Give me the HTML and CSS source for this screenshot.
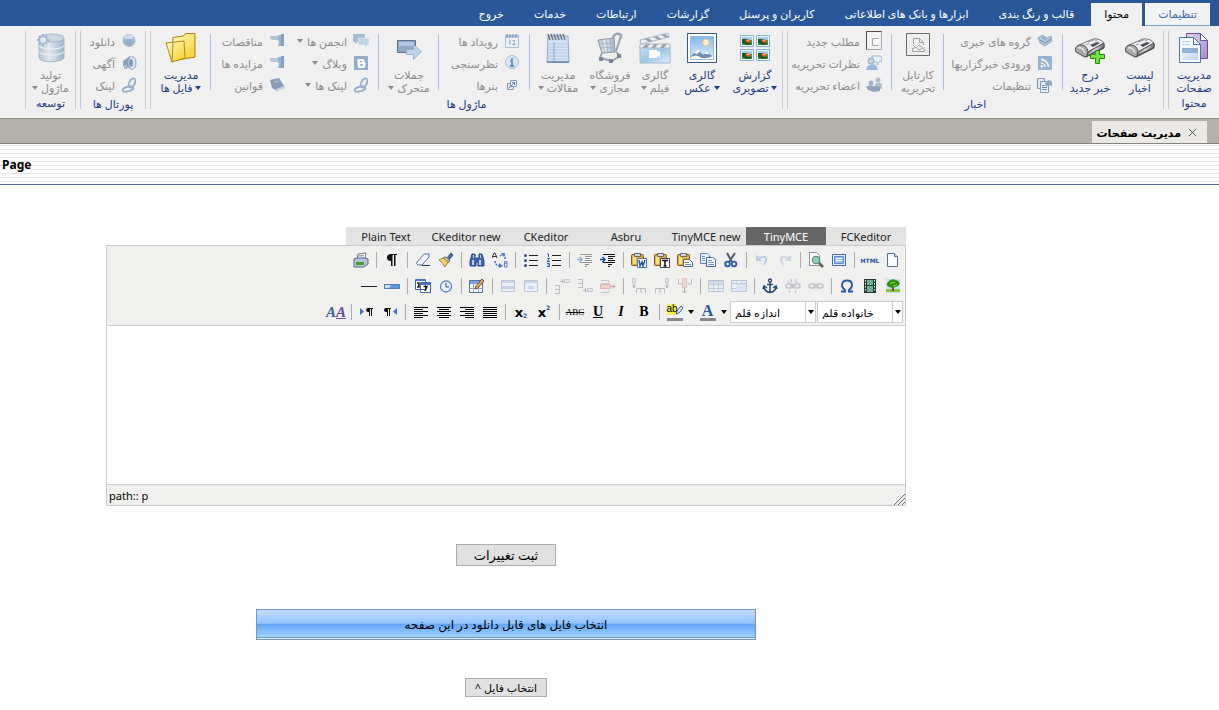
FILE: index.html
```html
<!DOCTYPE html>
<html lang="fa" dir="rtl">
<head>
<meta charset="utf-8">
<title>مدیریت صفحات</title>
<link rel="stylesheet" href="styles.css">
</head>
<body>
<svg class="sprite" aria-hidden="true">
  <defs>
    <linearGradient id="gBlue" x1="0" y1="0" x2="0" y2="1"><stop offset="0" stop-color="#7fb6ec"/><stop offset="1" stop-color="#e0f0fd"/></linearGradient>
    <linearGradient id="gFilm" x1="0" y1="0" x2="1" y2="1"><stop offset="0" stop-color="#c2e2f6"/><stop offset=".5" stop-color="#8cc0e4"/><stop offset="1" stop-color="#e3f2fb"/></linearGradient>
    <linearGradient id="gSteel" x1="0" y1="0" x2="1" y2="0"><stop offset="0" stop-color="#a9bdd2"/><stop offset=".4" stop-color="#dfe9f2"/><stop offset="1" stop-color="#91a8c3"/></linearGradient>
    <linearGradient id="gGold" x1="0" y1="0" x2="1" y2="1"><stop offset="0" stop-color="#fffbd0"/><stop offset="1" stop-color="#f9cc1c"/></linearGradient>
    <linearGradient id="gPage" x1="0" y1="0" x2="1" y2="1"><stop offset="0" stop-color="#f4f9fe"/><stop offset="1" stop-color="#b9d3f0"/></linearGradient>
    <linearGradient id="gPurple" x1="0" y1="0" x2="1" y2="1"><stop offset="0" stop-color="#e2d6f2"/><stop offset="1" stop-color="#a68cca"/></linearGradient>
    <linearGradient id="gPaper" x1="0" y1="0" x2="1" y2="0"><stop offset="0" stop-color="#8a8a8a"/><stop offset=".5" stop-color="#d5d5d5"/><stop offset="1" stop-color="#777"/></linearGradient>
  </defs>

  <symbol id="pages" viewBox="0 0 32 32"><path d="M8.500 1.500h14l7 7v18h-21z" fill="url(#gPurple)" stroke="#6a4f98"/><path d="M22.500 1.500v7h7z" fill="#fff" stroke="#6a4f98"/><path d="M1.500 5.500h14l7 7v18h-21z" fill="#f6faff" stroke="#4c74a8"/><path d="M15.500 5.500v7h7z" fill="#fff" stroke="#4c74a8"/><path d="M4 9h8v1H4zm0 3h8v1H4z" fill="#b9cfe8"/><path d="M4 16h16v12H4z" fill="url(#gPage)"/><path d="M4 16h16v5H4z" fill="#8fb2da"/></symbol>
  <symbol id="news" viewBox="0 0 32 32"><path d="m2 17 10 8 18-9v-4l-1-1" fill="#555" stroke="#3f3f3f" stroke-linejoin="round"/><path d="m5 13 14-6q7-1 11 4L14 20q-2-5-9-7z" fill="#ededed" stroke="#777" stroke-linejoin="round"/><path d="m14 20 16-9v4l-17 9z" fill="url(#gPaper)" stroke="#555"/><path d="M5 13q8-1 9 7l-1 4q-2 2-4 0l-7-4q-2-5 3-7z" fill="#a9a9a9" stroke="#4a4a4a"/><path d="M4 16q5-1 7 5" fill="none" stroke="#e4e4e4" stroke-width="1.500"/><path d="m16 13 7-3 3 1-7 4z" fill="#4b4e5c"/><path d="m12 13 3-1m-1-2 6-2m1 1 2-1" stroke="#999"/></symbol>
  <symbol id="newsAdd" viewBox="0 0 32 32"><use href="#news"/><path d="M21.500 18.500h4v4h5v4h-5v5h-4v-5h-5v-4h5z" fill="#6fe43c" stroke="#2a8a10"/></symbol>
  <symbol id="cartable" viewBox="0 0 32 32"><path d="M4.500 1.500h23v22h-23z" fill="#eee" stroke="#555"/><path d="M11.500 12V6.500h6l4 4V13M17.500 6.500v4h4M11 13l3 3 3-3 4 3M10 17l4-2 3 3 5-2M10.500 16v3.500h12V17" fill="none" stroke="#999"/></symbol>
  <symbol id="photos" viewBox="0 0 32 32"><g id="ph"><path d="M1.500 3.500h13v11h-13z" fill="#f4f9fe" stroke="#86b0dc"/><path d="M3 5h10v3H3z" fill="#9ed2fa"/><path d="M3 8h10v5H3z" fill="#3fa238"/><path d="m3 7 4 0 6 5-5 1-5-2z" fill="#1b5a1e"/><path d="m6 8 3-1 3 2-2 2-3-1z" fill="#e8502a"/><path d="M8 8h2v1H8z" fill="#ffd24c"/></g><use href="#ph" x="16"/><use href="#ph" y="14"/><use href="#ph" x="16" y="14"/></symbol>
  <symbol id="picture" viewBox="0 0 32 32"><path d="M1.500 1.500h29v29h-29z" fill="#fff" stroke="#35597f"/><path d="M4.500 4.500h23v23h-23z" fill="url(#gBlue)" stroke="#9bb9da"/><circle cx="20" cy="10.500" r="3.300" fill="#fff2cf" stroke="#efc184"/><path d="m5 24 7-7 5 6 4-4 6 6v2H5z" fill="#6c8bad"/><path d="m8 21 4-4 3 4-2-1-2 2zm10 1 3-3 3 4-2-1zM5 25q5-3 9 0t13-1v3H5z" fill="#fff"/></symbol>
  <symbol id="film" viewBox="0 0 32 32"><path d="M1 14h30v17H1z" fill="url(#gFilm)" stroke="#8fb3cc"/><path d="M1 12h30v4H1z" fill="#f0f4f7" stroke="#a3b3c0"/><path d="m3 16 4-4h4l-3 4zm9 0 3-4h4l-3 4zm9 0 3-4h4l-3 4z" fill="#8c9aa8"/><path d="M1 8 29 1l1 4L2 12z" fill="#f0f4f7" stroke="#a3b3c0"/><path d="m5 7 5 3 4-1-5-3zm9-2 5 3 4-1-5-3zm8-2 5 3 3-1-4-3z" fill="#8c9aa8"/><path d="M10 18h8v2l3-1v6l-3-1v2h-8z" fill="#fff"/></symbol>
  <symbol id="cart" viewBox="0 0 32 32"><path d="m4 8 16-2 1 14-13 1z" fill="url(#gSteel)" stroke="#77889a"/><path d="m8 8 3 13m1-13 2 13m2-14 2 14M5 12l16-1M6 16l15-1" stroke="#9aa9b9"/><path d="M19 6c1-5 5-5 8-3v3" fill="none" stroke="#8a98a8" stroke-width="2.500"/><path d="m22 19 5-15M8 21l-2 5 12 3 8-5-4-4" fill="none" stroke="#8a98a8" stroke-width="2"/><path d="M5 25h4v4H5zm10 2h4v4h-4zm8-5h4v4h-4z" fill="#68778a"/></symbol>
  <symbol id="notebook" viewBox="0 0 32 32"><path d="M6 4h20l1 26H5z" fill="#cfe1f5" stroke="#7d9fc4"/><path d="M5 30h22" stroke="#6485a8" stroke-width="2"/><path d="M6 12h20M6 15h20M6 18h20M6 21h20M6 24h20M6 27h20" stroke="#9dbcdd" stroke-width=".8"/><path d="M12 10v19" stroke="#8098b2"/><path d="m6 2 2 6m1-6 2 6m1-6 2 6m1-6 2 6m1-6 2 6m1-6 2 6" stroke="#566573" stroke-width="1.500"/></symbol>
  <symbol id="transfer" viewBox="0 0 32 32"><path d="M4.500 8.500h18v12h-18z" fill="#7f9cbc" stroke="#4a5c70"/><path d="M6 10h15v4H6z" fill="#a7c0da"/><path d="M13.500 17.500h7v-5l8 7-8 8v-5h-7z" fill="#b4cfea" stroke="#8ba7c4"/></symbol>
  <symbol id="folder" viewBox="0 0 32 32"><path d="M8 5.500 18 4l3-2.500h9V25L7 29z" fill="url(#gGold)" stroke="#a98208"/><path d="m1 11 18-2 1 17-13 4z" fill="url(#gGold)" stroke="#b08c14"/><path d="m7 30 1-19" stroke="#b08c14"/></symbol>
  <symbol id="database" viewBox="0 0 32 32"><path d="M4 6v20c2 5 22 5 25 0V6z" fill="url(#gSteel)" stroke="#9aaec3"/><ellipse cx="16.500" cy="6" rx="12.500" ry="4" fill="#c4d3e2" stroke="#9aaec3"/><path d="M4 14c4 4 21 4 25 0M4 20c4 4 21 4 25 0" fill="none" stroke="#eef4fa"/><path d="M8 2v12M2 8h12M4 4l8 8m0-8-8 8" stroke="#8fabcc" stroke-width="2"/><circle cx="8" cy="8" r="3.500" fill="#dce9f5" stroke="#8fabcc"/></symbol>

  <symbol id="newsgroup" viewBox="0 0 16 16"><path d="m1 5 4-3 5 3 4-2 1 5-7 5-5-3z" fill="#a7c1dc" stroke="#7f9dbe" stroke-linejoin="round"/><path d="m3 7 5 3 6-4M5 4l4 3" fill="none" stroke="#5d7fa5"/></symbol>
  <symbol id="rss" viewBox="0 0 16 16"><rect x="1" y="1" width="14" height="14" rx="1" fill="#86a9cf"/><path d="M4 8a4 4 0 0 1 4 4M4 4.500a7.500 7.500 0 0 1 7.500 7.500" fill="none" stroke="#fff" stroke-width="1.500"/><circle cx="4.800" cy="11.300" r="1.200" fill="#fff"/></symbol>
  <symbol id="pagecfg" viewBox="0 0 16 16"><path d="M.500 1.500h7v10h-7z" fill="#dce8f4" stroke="#6c88a8"/><path d="M3.500 4.500h8v11h-8z" fill="#e6eff8" stroke="#6c88a8"/><path d="M5 12.500h5M5 10.500h5M5 8.500h3" stroke="#5a7899"/><path d="m8 6 3-3 4 1v5l-3-1-3 2z" fill="#7d9dc0"/></symbol>
  <symbol id="newitem" viewBox="0 0 16 20"><path d="M.500.500h15v18H.500z" fill="#f3f3f3" stroke="#999"/><path d="M15.500.500H.500v18" fill="none" stroke="#333"/><path d="M12.500 7.500h-6v7h6" fill="#fff" stroke="#999"/></symbol>
  <symbol id="comment" viewBox="0 0 16 16"><path d="M6 1h8q2 0 2 3t-3 3l-2 3V7H7z" fill="#eaf4fd" stroke="#8fb3d7"/><circle cx="5" cy="6" r="3" fill="#bccede" stroke="#819bb5"/><path d="M0 15q1-6 6-6t6 6z" fill="#8cb0d4"/></symbol>
  <symbol id="members" viewBox="0 0 16 16"><circle cx="12" cy="3" r="2.500" fill="#a4b8cc"/><path d="M9 7q4-3 7 0v5H9z" fill="#a4b8cc"/><circle cx="5" cy="6" r="2.500" fill="#93a9bf"/><path d="M0 10q4-3 7-1l7 1v4l-6 1-6-2z" fill="#7f9ab6"/></symbol>
  <symbol id="calendar" viewBox="0 0 16 16"><path d="M1.500 2.500h13v12h-13z" fill="#eaf2fa" stroke="#9fb6cf"/><path d="M1 2h14v3H1z" fill="#a3bbd4"/><path d="M3 1v3m3-3v3m3-3v3m3-3v3" stroke="#5f7690"/><path d="M5 7h1v5M8.500 7.500h2v2l-2 2h3" fill="none" stroke="#7d99b8"/></symbol>
  <symbol id="info" viewBox="0 0 16 16"><circle cx="8" cy="7" r="6.500" fill="#d3e4f5" stroke="#9db6d0"/><path d="m9 12 2 4V11z" fill="#b4cee8"/><path d="M8 3v2M6 6h2v5M6 11h4" fill="none" stroke="#3f6ea5" stroke-width="1.600"/></symbol>
  <symbol id="banner" viewBox="0 0 16 16"><path d="M3.500 6.500h6v6h-6z" fill="#dbe7f4" stroke="#708bae"/><path d="M6.500 3.500h6v6h-6z" fill="#eef4fb" stroke="#708bae"/><path d="m5 11 5-5M8 5.500h2.500V8" fill="none" stroke="#456c9b"/></symbol>
  <symbol id="forum" viewBox="0 0 16 16"><path d="M0 1h12v8H5l-3 2V9H0z" fill="#9ab5d1"/><path d="M5 5h11v7h-2v3l-3-3H5z" fill="#b9cee3" stroke="#eef4fa" stroke-width=".5"/></symbol>
  <symbol id="blog" viewBox="0 0 16 16"><path d="M1 1h14v14H1z" fill="#83a2c4"/><path d="M4.500 4h5q2 0 2 3l1 1v2q0 3-3 3h-3q-2 0-2-3z" fill="#fff"/><path d="M7 6.500h2M7 10h3" stroke="#83a2c4" stroke-width="1.500"/></symbol>
  <symbol id="link" viewBox="0 0 16 16"><g fill="none" stroke="#86a2c1" stroke-width="1.800"><ellipse cx="11" cy="6" rx="2.800" ry="5" transform="rotate(25 11 6)"/><ellipse cx="7" cy="12" rx="2.300" ry="5.500" transform="rotate(75 7 12)"/></g></symbol>
  <symbol id="tender" viewBox="0 0 16 16"><path d="M1 3h8l3-1v6L9 7H4L1 6z" fill="#a8c0da"/><path d="m9 2 6 0v11H9l1-4-1-2z" fill="#8ba8c8"/><path d="M12 1h3v12h-3z" fill="#7392b4"/></symbol>
  <symbol id="book" viewBox="0 0 16 16"><path d="m1 3 9-2 5 8-8 4-4-2z" fill="#7590b0"/><path d="m7 12 8-3v2l-8 3z" fill="#d6e1ec" stroke="#7590b0" stroke-width=".5"/><path d="m5 5 5-1" stroke="#b3c5d8"/></symbol>
  <symbol id="download" viewBox="0 0 16 16"><circle cx="8" cy="7.500" r="6.500" fill="#9fb8d2"/><path d="M3 3q5-3 10 0l-3 4H5z" fill="#c9d9e9"/><path d="M5 6h6v2h3l-6 6-6-6h3z" fill="#8aa4c1"/></symbol>
  <symbol id="advert" viewBox="0 0 16 16"><path d="m2 6 7-5 5 12-7 0-5-2z" fill="#7b96b5"/><ellipse cx="11" cy="8" rx="4" ry="6.500" fill="#dce7f2" stroke="#7c98b7"/><ellipse cx="10" cy="8" rx="2" ry="4" fill="#718ead"/><path d="M3 10h3v4H3z" fill="#9cb4ce"/></symbol>

  <symbol id="newdoc" viewBox="0 0 16 16"><path d="M2.500 1.500h7l3 3v10h-10z" fill="#fbfcff" stroke="#5b718f"/><path d="M9.500 1.500v3h3" fill="#cfdcf0" stroke="#5b718f"/></symbol>
  <symbol id="fullscreen" viewBox="0 0 16 16"><path d="M1.500 2.500h13v11h-13z" fill="#e8f1fd" stroke="#3e6cb4"/><path d="M3.500 4.500h9v7h-9z" fill="#9dbef0" stroke="#5a89d0"/><path d="M5 6.500h6M5 8.500h6" stroke="#fff"/></symbol>
  <symbol id="preview" viewBox="0 0 16 16"><path d="M1.500.500h7l3 3v10h-10z" fill="#fff" stroke="#7d91aa"/><circle cx="8" cy="8" r="3.800" fill="#8fcfb4" stroke="#4d817a"/><path d="m11 11 4 4" stroke="#6b5a4c" stroke-width="2.500"/></symbol>
  <symbol id="undo" viewBox="0 0 16 16"><path d="m2 3 0 6h6L6 7q5-3 5 1 0 3-3 6 6-3 5-8-1-4-7-1z" fill="#bccae4"/></symbol>
  <symbol id="redo" viewBox="0 0 16 16"><path d="m14 3 0 6H8l2-2q-5-3-5 1 0 3 3 6-6-3-5-8 1-4 7-1z" fill="#ced6e3"/></symbol>
  <symbol id="cut" viewBox="0 0 16 16"><path d="m4 1 5 9m3-9L6 10" stroke="#4f5d70" stroke-width="2"/><circle cx="4.500" cy="12" r="2.300" fill="none" stroke="#245baf" stroke-width="1.800"/><circle cx="11" cy="12" r="2.300" fill="none" stroke="#245baf" stroke-width="1.800"/></symbol>
  <symbol id="copy" viewBox="0 0 16 16"><path d="M.500 1.500h7l2 2v8h-9z" fill="#eaf2ff" stroke="#5f80bd"/><path d="M6.500 5.500h6l3 2v7h-9z" fill="#fff" stroke="#3f66b0"/><path d="M2 4.500h3M2 6.500h3M2 8.500h3M8 8.500h4M8 10.500h6M8 12.500h6" stroke="#6f94d4"/></symbol>
  <symbol id="clip" viewBox="0 0 16 16"><rect x=".500" y="2.500" width="12" height="11" rx="1" fill="#e3b040" stroke="#7c5c1c"/><path d="M2 4h3v8H2z" fill="#f8dc86"/><path d="M3.500 1.500h6v3h-6z" fill="#d2d5dc" stroke="#666"/></symbol>
  <symbol id="paste" viewBox="0 0 16 16"><use href="#clip"/><path d="M6.500 7.500h6l3 3v4h-9z" fill="#fff" stroke="#4f617c"/><path d="M8 10.500h4M8 12.500h6" stroke="#5d89cd"/></symbol>
  <symbol id="pasteText" viewBox="0 0 16 16"><use href="#clip"/><path d="M6.500 6.500h9v9h-9z" fill="#fff" stroke="#444"/><path d="M8 8.500h6m-3 0V14M9.500 14h3" stroke="#111" stroke-width="1.500"/></symbol>
  <symbol id="pasteWord" viewBox="0 0 16 16"><use href="#clip"/><path d="M6.500 6.500h9v9h-9z" fill="#fff" stroke="#5476ad"/><path d="m8 8 1 6 2-4 1 4 2-6" fill="none" stroke="#1e57b8" stroke-width="1.500"/></symbol>
  <symbol id="indent" viewBox="0 0 16 16"><path d="M3 2.500h12M8 4.500h7M8 6.500h5M8 8.500h7M3 10.500h12M8 12.500h4M8 14.500h2" stroke="#111" shape-rendering="crispEdges"/><path d="M0 7.500h4M2.500 5 5 7.500 2.500 10" fill="none" stroke="#164fae" stroke-width="1.500"/></symbol>
  <symbol id="ul" viewBox="0 0 16 16"><path d="M6 3.500h9M6 8.500h9M6 13.500h9" stroke="#222" shape-rendering="crispEdges"/><circle cx="2.500" cy="3.500" r="1.500" fill="#36517f"/><circle cx="2.500" cy="8.500" r="1.500" fill="#36517f"/><circle cx="2.500" cy="13.500" r="1.500" fill="#36517f"/></symbol>
  <symbol id="ol" viewBox="0 0 16 16"><path d="M6 3.500h9M6 8.500h9M6 13.500h9" stroke="#222" shape-rendering="crispEdges"/><path d="M1 2h1.500v3M1 6.500h2.500L1 9.500h3M1 11.500h2.500v3H1M1.500 13h2" fill="none" stroke="#315eb9"/></symbol>
  <symbol id="replace" viewBox="0 0 16 16"><path d="m0 6 2-5h1l2 5M1 4.500h3" fill="none" stroke="#333"/><path d="M12.500 9.500H15v2h-2.500H15V15h-2.500z" fill="none" stroke="#5d83c9"/><path d="M8 4q5-3 5 3M3 9q0 5 6 5" fill="none" stroke="#4476d0" stroke-dasharray="2 1" stroke-width="1.500"/><path d="m9 1 4 0-1 4zM7 11l4 3-4 2z" fill="#4476d0"/></symbol>
  <symbol id="find" viewBox="0 0 16 16"><path d="M3 2h3v4h4V2h3l2 7v5H9v-4H7v4H1V9z" fill="#3f65a8" stroke="#284a83"/><path d="M3 8h2v5H3zm7 0h2v5h-2zM4 3h1v3H4zm7 0h1v3h-1z" fill="#bcd0ee"/></symbol>
  <symbol id="brush" viewBox="0 0 16 16"><path d="m9 6 4-5 2 2-4 5z" fill="#516da3" stroke="#35507c"/><path d="M6 5q3-1 6 4l-2 2-6-4z" fill="#bbb" stroke="#777"/><path d="m1 8 4-2 5 4-3 5q-2-4-6-7z" fill="#f3d664" stroke="#a68626"/></symbol>
  <symbol id="eraser" viewBox="0 0 16 16"><path d="m2 10 7-8h5v3l-7 8H3q-2-1-1-3z" fill="#eef4ff" stroke="#586f99"/><path d="M7 13.500h8" stroke="#26344f"/></symbol>
  <symbol id="pilcrow" viewBox="0 0 16 16"><path d="M7 9Q3 9 3 5.500T7 2h6v1h-1.500v11H10V3H8.500v11H7z" fill="#111"/></symbol>
  <symbol id="print" viewBox="0 0 16 16"><path d="m5 2 8-1-1 6H4z" fill="#fff" stroke="#777"/><path d="m1 7 3-1h8l3 1v5l-4 3H1z" fill="#b5c3d8" stroke="#596982"/><path d="M3 10h8v3H3z" fill="#41a02f"/><path d="M6 3.500h5M5.500 5h5" stroke="#8b9bb1"/></symbol>

  <symbol id="tree" viewBox="0 0 16 16"><path d="M1 1h14v14H1z" fill="#c5e2fa"/><path d="M1 11h14v3H1z" fill="#8cc63f"/><path d="M7 8h2v5H7z" fill="#7c4b1c"/><path d="M4 9q-4-2-1-5 3-4 8-2 5 2 3 5-4 4-10 2z" fill="#2f8f10"/><path d="M5 6q2-3 5-1M8 8q3 0 4-2" stroke="#a7dc3b" fill="none"/></symbol>
  <symbol id="media" viewBox="0 0 16 16"><path d="M2 1h12v14H2z" fill="#263a36"/><path d="M5 2h6v5H5zm0 6h6v6H5z" fill="#68b38e"/><path d="M3.500 2v12m9-12v12" stroke="#eee" stroke-dasharray="1.500 1.500"/></symbol>
  <symbol id="omega" viewBox="0 0 16 16"><path d="M2 13.500h4v-1.500q-3-2-3-5 0-4.500 5-4.500t5 4.500q0 3-3 5v1.500h4" fill="none" stroke="#2853a9" stroke-width="1.800"/></symbol>
  <symbol id="chain" viewBox="0 0 16 16"><g fill="none" stroke="#bfc3cb" stroke-width="1.500"><rect x="1" y="6" width="7" height="4" rx="2"/><rect x="8" y="6" width="7" height="4" rx="2"/><path d="M5 8h6"/></g></symbol>
  <symbol id="unchain" viewBox="0 0 16 16"><use href="#chain"/><path d="m6 1 1 3m4-3-1 3M4 15l1-3m6 3-1-3m3-9-2 2M3 3l2 2" stroke="#bbc"/></symbol>
  <symbol id="anchor" viewBox="0 0 16 16"><circle cx="8" cy="2.500" r="1.500" fill="none" stroke="#28466f" stroke-width="1.300"/><path d="M8 4v10M5 6.500h6M2 9q1 5 6 5.500 5-.500 6-5.500M1 11l1-3 3 2m6 0 3-2 1 3" fill="none" stroke="#28466f" stroke-width="1.500"/></symbol>
  <symbol id="table" viewBox="0 0 16 16"><path d="M.500 2.500h15v11H.500z" fill="#e7edf6" stroke="#8c9fbe"/><path d="M1 3h14v3H1z" fill="#c3d2ea"/><path d="M.500 6.500h15M.500 10.500h15M5.500 3v10M10.500 3v10" stroke="#a0afca"/></symbol>
  <symbol id="merge" viewBox="0 0 16 16"><path d="M.500 2.500h15v11H.500z" fill="#e7edf6" stroke="#8c9fbe"/><path d="M1 5.500h14M5.500 3v3M10.500 3v3M1 10.500h4" stroke="#a0afca"/><path d="M5 6h10v7H5z" fill="#c9d8f0"/></symbol>
  <symbol id="row" viewBox="0 0 16 16"><path d="M1.500 2.500h13v11h-13z" fill="#e8eef7" stroke="#94a5c0"/><path d="M2 3h12v2H2zm0 5h12v3H2z" fill="#a9bfe1"/></symbol>
  <symbol id="cell" viewBox="0 0 16 16"><path d="M1.500 2.500h13v11h-13z" fill="#e8eef7" stroke="#94a5c0"/><path d="M2 3h12v2H2zm3 5h6v3H5z" fill="#a9bfe1"/></symbol>
  <symbol id="rowBefore" viewBox="0 0 16 16"><path d="M1 15.500h4.500v-4H1m4.500 0v-4H1" fill="none" stroke="#8e8e96"/><path d="M6 3.500h4M8.500 1v4" stroke="#888"/><path d="M10.500 1.500h5v3h-5z" fill="#dce5f3" stroke="#9ba9c0"/></symbol>
  <symbol id="rowAfter" viewBox="0 0 16 16"><path d="M1 1.500h4.500v4H1m0 4h4.500v-4" fill="none" stroke="#8e8e96"/><path d="M6 12.500h4M8.500 10v4" stroke="#888"/><path d="M10.500 10.500h5v3h-5z" fill="#dce5f3" stroke="#9ba9c0"/></symbol>
  <symbol id="rowDelete" viewBox="0 0 16 16"><path d="M1 2.500h8v3H1m8 6v3H1" fill="none" stroke="#a9a9ae"/><path d="M.500 6.500h10v4H.500z" fill="#f0b8b4" stroke="#d88883"/><path d="M10 8.500h5m-2-2 2 2-2 2" fill="none" stroke="#777"/></symbol>
  <symbol id="colBefore" viewBox="0 0 16 16"><path d="M5.500 15v-4.500h9V15m-4.500-5v5" fill="none" stroke="#8e8e96"/><path d="M1.500.500h3v4h-3z" fill="#dce5f3" stroke="#9ba9c0"/><path d="M3 5v5M1.500 7.500 3 9.500l1.500-2" fill="none" stroke="#777"/></symbol>
  <symbol id="colDelete" viewBox="0 0 16 16"><path d="M1.500 1v5h4m5 0h4V1" fill="none" stroke="#8e8e96"/><path d="M5.500.500h4v9h-4z" fill="#efc3be" stroke="#d69a95"/><path d="M7.500 10v5m-2-2 2 2 2-2" fill="none" stroke="#777"/></symbol>
  <symbol id="tableEdit" viewBox="0 0 16 16"><path d="M.500 2.500h13v12H.500z" fill="#fff" stroke="#4f6f9f"/><path d="M1 3h12v3H1z" fill="#7ca4e2"/><path d="M.500 10.500h13M4.500 6v8M9.500 6v8" stroke="#8ba4c8"/><path d="m6 11 1-3 6-7 2 2-6 7z" fill="#e0ab62" stroke="#755023"/></symbol>
  <symbol id="clock" viewBox="0 0 16 16"><circle cx="8" cy="8.500" r="5.500" fill="#eaf3ff" stroke="#5a82c0" stroke-width="1.300"/><path d="M8 5v4h3" fill="none" stroke="#234d91"/></symbol>
  <symbol id="date" viewBox="0 0 16 16"><path d="M.500 1.500h10v10H.500zM5.500 4.500h10v10h-10z" fill="#fff" stroke="#3d64a8"/><path d="M1 1h9v2H1zm5 4h9v2H6z" fill="#4776c5"/><path d="M2 5h2v4H2m1-2h1M8.500 8.500H12L10 13" fill="none" stroke="#111" stroke-width="1.300"/></symbol>
  <symbol id="hrAdv" viewBox="0 0 16 16"><path d="M.500 6.500h15v4H.500z" fill="#5c94e0" stroke="#5079b9"/><path d="M1 7h6l-2 3H1z" fill="#cfe2fb"/></symbol>
  <symbol id="hr" viewBox="0 0 16 16"><path d="M0 8.500h16" stroke="#222"/></symbol>
  <symbol id="alignJ" viewBox="0 0 16 16"><path d="M1 3.500h14M1 5.500h14M1 7.500h14M1 9.500h14M1 11.500h14M1 13.500h14" stroke="#000" shape-rendering="crispEdges"/></symbol>
  <symbol id="alignL" viewBox="0 0 16 16"><path d="M1 3.500h14M1 5.500h9M1 7.500h14M1 9.500h9M1 11.500h14M1 13.500h9" stroke="#000" shape-rendering="crispEdges"/></symbol>
  <symbol id="alignR" viewBox="0 0 16 16"><path d="M1 3.500h14M6 5.500h9M1 7.500h14M6 9.500h9M1 11.500h14M6 13.500h9" stroke="#000" shape-rendering="crispEdges"/></symbol>
  <symbol id="alignC" viewBox="0 0 16 16"><path d="M1 3.500h14M3 5.500h10M1 7.500h14M3 9.500h10M1 11.500h14M3 13.500h10" stroke="#000" shape-rendering="crispEdges"/></symbol>
  <symbol id="rtlMark" viewBox="0 0 16 16"><path d="M4 8Q2 8 2 6t2-2h5v1H8v7H7V5H6v7H5V8z" fill="#111"/><path d="m15 4-4 3.500 4 3.500z" fill="#3e70cb"/></symbol>
  <symbol id="ltrMark" viewBox="0 0 16 16"><path d="M9 8Q7 8 7 6t2-2h5v1h-1v7h-1V5h-1v7h-1V8z" fill="#111"/><path d="m1 4 4 3.500L1 11z" fill="#3e70cb"/></symbol>
  <symbol id="highlight" viewBox="0 0 16 17"><path d="M0 0h9v11H0z" fill="#f7ee4c"/><path d="m9 10 1-3 4-5 2 2-4 5z" fill="#dce8ff" stroke="#375f9e"/><path d="M0 14h16v3H0z" fill="#888"/></symbol>
</svg>

<nav class="menu" aria-label="منوی اصلی">
  <a class="menu-tab outlined" href="#">تنظیمات</a>
  <a class="menu-tab current" href="#" aria-current="page">محتوا</a>
  <a class="menu-tab" href="#">قالب و رنگ بندی</a>
  <a class="menu-tab" href="#">ابزارها و بانک های اطلاعاتی</a>
  <a class="menu-tab" href="#">کاربران و پرسنل</a>
  <a class="menu-tab" href="#">گزارشات</a>
  <a class="menu-tab" href="#">ارتباطات</a>
  <a class="menu-tab" href="#">خدمات</a>
  <a class="menu-tab" href="#">خروج</a>
</nav>

<div class="ribbon">
  <section class="group content-group">
    <div class="cells"><button class="big"><svg><use href="#pages"/></svg><span>مدیریت<br>صفحات</span></button></div>
    <h2>محتوا</h2>
  </section>
  <section class="group news-group">
    <div class="cells">
      <button class="big"><svg><use href="#news"/></svg><span>لیست<br>اخبار</span></button>
      <button class="big"><svg><use href="#newsAdd"/></svg><span>درج<br>خبر جدید</span></button>
      <div class="stack ruled">
        <button class="small" disabled><svg><use href="#newsgroup"/></svg>گروه های خبری</button>
        <button class="small" disabled><svg><use href="#rss"/></svg>ورودی خبرگزاریها</button>
        <button class="small" disabled><svg><use href="#pagecfg"/></svg>تنظیمات</button>
      </div>
      <button class="big ruled" disabled><svg><use href="#cartable"/></svg><span>کارتابل<br>تحریریه</span></button>
      <div class="stack ruled">
        <button class="small" disabled><svg class="tall"><use href="#newitem"/></svg>مطلب جدید</button>
        <button class="small" disabled><svg><use href="#comment"/></svg>نظرات تحریریه</button>
        <button class="small" disabled><svg><use href="#members"/></svg>اعضاء تحریریه</button>
      </div>
    </div>
    <h2>اخبار</h2>
  </section>
  <section class="group module-group">
    <div class="cells">
      <button class="big"><svg><use href="#photos"/></svg><span>گزارش<br><i class="caret"></i> تصویری</span></button>
      <button class="big"><svg><use href="#picture"/></svg><span>گالری<br><i class="caret"></i> عکس</span></button>
      <button class="big" disabled><svg><use href="#film"/></svg><span>گالری<br>فیلم <i class="caret"></i></span></button>
      <button class="big" disabled><svg><use href="#cart"/></svg><span>فروشگاه<br>مجازی <i class="caret"></i></span></button>
      <button class="big" disabled><svg><use href="#notebook"/></svg><span>مدیریت<br>مقالات <i class="caret"></i></span></button>
      <div class="stack ruled">
        <button class="small" disabled><svg><use href="#calendar"/></svg>رویداد ها</button>
        <button class="small" disabled><svg><use href="#info"/></svg>نظرسنجی</button>
        <button class="small" disabled><svg><use href="#banner"/></svg>بنرها</button>
      </div>
      <button class="big ruled" disabled><svg><use href="#transfer"/></svg><span>جملات<br>متحرک <i class="caret"></i></span></button>
      <div class="stack ruled">
        <button class="small" disabled><svg><use href="#forum"/></svg>انجمن ها<i class="caret"></i></button>
        <button class="small" disabled><svg><use href="#blog"/></svg>وبلاگ<i class="caret"></i></button>
        <button class="small" disabled><svg><use href="#link"/></svg>لینک ها<i class="caret"></i></button>
      </div>
      <div class="stack">
        <button class="small" disabled><svg><use href="#tender"/></svg>مناقصات</button>
        <button class="small" disabled><svg><use href="#tender"/></svg>مزایده ها</button>
        <button class="small" disabled><svg><use href="#book"/></svg>قوانین</button>
      </div>
      <button class="big ruled"><svg><use href="#folder"/></svg><span>مدیریت<br><i class="caret"></i> فایل ها</span></button>
    </div>
    <h2>ماژول ها</h2>
  </section>
  <section class="group portal-group">
    <div class="cells">
      <div class="stack">
        <button class="small" disabled><svg><use href="#download"/></svg>دانلود</button>
        <button class="small" disabled><svg><use href="#advert"/></svg>آگهی</button>
        <button class="small" disabled><svg><use href="#link"/></svg>لینک</button>
      </div>
    </div>
    <h2>پورتال ها</h2>
  </section>
  <section class="group dev-group">
    <div class="cells"><button class="big" disabled><svg><use href="#database"/></svg><span>تولید<br>ماژول <i class="caret"></i></span></button></div>
    <h2>توسعه</h2>
  </section>
</div>

<div class="documents">
  <div class="document"><button class="close" aria-label="بستن"><svg viewBox="0 0 10 10"><path d="m1 1 8 8m0-8-8 8" stroke="#444" fill="none"/></svg></button><span>مدیریت صفحات</span></div>
</div>
<header class="page-head"><h1>Page</h1></header>

<main>
  <div class="editor-wrap">
    <nav class="editors" aria-label="Editors">
      <a href="#">FCKeditor</a><a class="on" href="#">TinyMCE</a><a href="#">TinyMCE new</a><a href="#">Asbru</a><a href="#">CKeditor</a><a href="#">CKeditor new</a><a href="#">Plain Text</a>
    </nav>
    <div class="editor">
      <div class="tools">
        <div class="row">
          <button aria-label="New"><svg><use href="#newdoc"/></svg></button><button class="html">HTML</button><hr>
          <button aria-label="Fullscreen"><svg><use href="#fullscreen"/></svg></button><button aria-label="Preview"><svg><use href="#preview"/></svg></button><hr>
          <button disabled aria-label="Redo"><svg><use href="#redo"/></svg></button><button disabled aria-label="Undo"><svg><use href="#undo"/></svg></button><hr>
          <button aria-label="Cut"><svg><use href="#cut"/></svg></button><button aria-label="Copy"><svg><use href="#copy"/></svg></button><button aria-label="Paste"><svg><use href="#paste"/></svg></button><button aria-label="Paste text"><svg><use href="#pasteText"/></svg></button><button aria-label="Paste Word"><svg><use href="#pasteWord"/></svg></button><hr>
          <button aria-label="Indent"><svg><use href="#indent"/></svg></button><button class="dim" disabled aria-label="Outdent"><svg><use href="#indent"/></svg></button><hr>
          <button aria-label="Numbered list"><svg><use href="#ol"/></svg></button><button aria-label="Bullet list"><svg><use href="#ul"/></svg></button><hr>
          <button aria-label="Replace"><svg><use href="#replace"/></svg></button><button aria-label="Find"><svg><use href="#find"/></svg></button><hr>
          <button aria-label="Clean up"><svg><use href="#brush"/></svg></button><button aria-label="Remove format"><svg><use href="#eraser"/></svg></button><hr>
          <button aria-label="Show characters"><svg><use href="#pilcrow"/></svg></button><hr>
          <button aria-label="Print"><svg><use href="#print"/></svg></button>
        </div>
        <div class="row">
          <button aria-label="Image"><svg><use href="#tree"/></svg></button><button aria-label="Media"><svg><use href="#media"/></svg></button><button aria-label="Symbol"><svg><use href="#omega"/></svg></button><hr>
          <button disabled aria-label="Link"><svg><use href="#chain"/></svg></button><button disabled aria-label="Unlink"><svg><use href="#unchain"/></svg></button><button aria-label="Anchor"><svg><use href="#anchor"/></svg></button><hr>
          <button class="pale" disabled aria-label="Merge cells"><svg><use href="#merge"/></svg></button><button class="pale" disabled aria-label="Split cells"><svg><use href="#table"/></svg></button><hr>
          <button class="pale" disabled aria-label="Delete column"><svg><use href="#colDelete"/></svg></button><button class="pale flip" disabled aria-label="Column after"><svg><use href="#colBefore"/></svg></button><button class="pale" disabled aria-label="Column before"><svg><use href="#colBefore"/></svg></button><hr>
          <button class="pale" disabled aria-label="Delete row"><svg><use href="#rowDelete"/></svg></button><button class="pale" disabled aria-label="Row after"><svg><use href="#rowAfter"/></svg></button><button class="pale" disabled aria-label="Row before"><svg><use href="#rowBefore"/></svg></button><hr>
          <button class="pale" disabled aria-label="Cell properties"><svg><use href="#cell"/></svg></button><button class="pale" disabled aria-label="Row properties"><svg><use href="#row"/></svg></button><hr>
          <button aria-label="Table"><svg><use href="#tableEdit"/></svg></button><hr>
          <button aria-label="Time"><svg><use href="#clock"/></svg></button><button aria-label="Date"><svg><use href="#date"/></svg></button><hr>
          <button aria-label="Advanced rule"><svg><use href="#hrAdv"/></svg></button><button aria-label="Rule"><svg><use href="#hr"/></svg></button>
        </div>
        <div class="row">
          <span class="picker"><select aria-label="خانواده قلم"><option>خانواده قلم</option></select></span><span class="picker"><select aria-label="اندازه قلم"><option>اندازه قلم</option></select></span>
          <button class="split" aria-label="Text colour"><i class="caret"></i><b class="ink">A</b></button><button class="split" aria-label="Highlight"><i class="caret"></i><b class="mark"><svg><use href="#highlight"/></svg><span>ab</span></b></button><hr>
          <button class="serif">B</button><button class="serif italic">I</button><button class="serif under">U</button><button class="strike">ABC</button><hr>
          <button class="script">x<sup>2</sup></button><button class="script">x<sub>2</sub></button><hr>
          <button aria-label="Justify"><svg><use href="#alignJ"/></svg></button><button aria-label="Align right"><svg><use href="#alignR"/></svg></button><button aria-label="Centre"><svg><use href="#alignC"/></svg></button><button aria-label="Align left"><svg><use href="#alignL"/></svg></button><hr>
          <button aria-label="Right to left"><svg><use href="#rtlMark"/></svg></button><button aria-label="Left to right"><svg><use href="#ltrMark"/></svg></button><hr>
          <button class="styleprops" aria-label="Style"><span>A</span><b>A</b></button>
        </div>
      </div>
      <textarea aria-label="Page content"></textarea>
      <div class="status"><span>path:: p</span><svg viewBox="0 0 12 12"><path d="M1 12 12 1M5 12l7-7M9 12l3-3" stroke="#666" fill="none"/></svg></div>
    </div>
  </div>
  <button class="submit">ثبت تغییرات</button>
  <button class="download-bar">انتخاب فایل های قابل دانلود در این صفحه</button>
  <button class="pick">انتخاب فایل ^</button>
</main>
</body>
</html>
```
FILE: styles.css
```css
* { box-sizing: border-box; }
body { margin: 0; background: #fff; color: #000; font: 11px/13px "Noto Sans", "DejaVu Sans", sans-serif; }
button, select, textarea { font: inherit; color: inherit; margin: 0; }
button { padding: 0; border: 0; background: none; }
a { color: inherit; text-decoration: none; }
h1, h2 { margin: 0; font: inherit; }
svg { display: block; flex: none; }
.sprite { position: absolute; width: 0; height: 0; }

.menu { display: flex; height: 26px; padding: 3px 9px 0; background: #2a579a; color: #fff; }
.menu-tab { padding: 4px 15px 0; white-space: nowrap; }
.menu-tab.outlined { padding: 4px 12px 0; margin-left: 3px; border: 1px solid #fff; border-bottom-color: #7da3d8; background: #f2f3f5; color: #3c6ab0; line-height: 11px; }
.menu-tab.current { padding: 4px 13px 0; margin-left: 2px; background: #f0f0f0; color: #000; }

.ribbon { display: flex; gap: 4px; height: 92px; padding-top: 5px; background: #f0f0f0; color: #1e3c82; }
.group { height: 78px; display: flex; flex-direction: column; border: 0 solid #c9cbce; border-width: 0 1px; }
.group:first-child { border-right: 0; }
.cells { display: grid; height: 68px; }
.group h2 { text-align: center; white-space: nowrap; }
.content-group { width: 51px; }
.content-group .cells, .dev-group .cells { grid-template-columns: 1fr; }
.news-group { width: 377px; }
.news-group .cells { grid-template-columns: 46px 54px 119px 52px 104px; }
.module-group { width: 633px; }
.module-group .cells { grid-template-columns: 54px 52px 42px 48px 56px 91px 60px 84px 84px 60px; }
.portal-group { width: 66px; }
.portal-group .small { padding-right: 8px; }
.dev-group { width: 51px; }
.big { display: flex; flex-direction: column; align-items: center; gap: 4px; padding-top: 1px; white-space: nowrap; }
.big svg { width: 32px; height: 32px; }
.big:disabled, .small:disabled { color: #8c8c8c; }
.big:disabled svg, .small:disabled svg { opacity: .85; }
.stack { display: flex; flex-direction: column; }
.small { display: flex; align-items: center; gap: 6px; height: 22px; padding: 0 10px 2px 0; white-space: nowrap; }
.small svg { width: 16px; height: 16px; }
.small svg.tall { height: 20px; }
.ruled { background: linear-gradient(#a9bfdd, #a9bfdd) right 3px / 1px 56px no-repeat; }
.caret { display: inline-block; border: 3px solid transparent; border-top: 4px solid; border-bottom: 0; vertical-align: 2px; }
.small .caret { margin-right: -2px; }

.documents { display: flex; height: 26px; padding: 2px 12px 0; border-top: 1px solid #8b8a83; border-bottom: 1px solid #85847e; background: #b4b1aa; }
.document { display: flex; align-items: center; gap: 7px; padding: 0 10px 0 5px; background: #ebe9e5; font-weight: bold; }
.close svg { width: 9px; height: 9px; }
.page-head { display: flex; align-items: center; height: 41px; padding: 0 2px; direction: ltr; border-bottom: 1px solid #5367ab; background: repeating-linear-gradient(#fff 0 1px, #e5e5e5 1px 2px, #fff 2px 4px); }
.page-head h1 { font-size: 12px; font-weight: bold; }

main { display: flex; flex-direction: column; align-items: center; padding: 42px 0 13px; margin-right: 207px; }
.editor-wrap { width: 100%; max-width: 800px; }
.editors { display: flex; height: 18px; color: #222; }
.editors a { width: 80px; height: 18px; padding-top: 3px; text-align: center; background: #e3e3e3; white-space: nowrap; direction: ltr; }
.editors .on { background: #666; color: #fff; }
.editor { border: 1px solid #ccc; }
.tools { padding: 1px 1px 0; background: #f0f0ee; border-bottom: 1px solid #ccc; }
.row { display: flex; height: 26px; align-items: center; }
.row button { display: flex; justify-content: center; align-items: center; width: 22px; height: 20px; margin-left: 1px; direction: ltr; flex: none; }
.row svg { width: 16px; height: 16px; }
.row hr { width: 1px; height: 16px; margin: 0 3px 0 4px; border: 0; background: #aaa; flex: none; }
.row .html { font: bold 6px "DejaVu Sans", sans-serif; color: #1e50a8; }
.dim svg { opacity: .4; }
.pale svg { opacity: .55; }
.flip svg { transform: scaleX(-1); }
.picker { position: relative; width: 86px; height: 22px; margin-left: 1px; direction: ltr; }
.picker:first-child { margin-right: 1px; }
.picker select { appearance: none; width: 100%; height: 22px; padding: 0 4px; border: 1px solid #ccc; border-radius: 0; background: linear-gradient(#ccc, #ccc) right 9px top / 1px 22px no-repeat #fff; }
.picker::after { content: ""; position: absolute; right: 2px; top: 9px; border: 3px solid transparent; border-top: 4px solid #000; border-bottom: 0; pointer-events: none; }
.row .split { width: 32px; flex-direction: row-reverse; gap: 5px; }
.ink { width: 16px; height: 17px; border-bottom: 3px solid #888; color: #2853a0; font: bold 16px/14px "Liberation Serif", serif; }
.mark { display: grid; width: 16px; height: 17px; font: 10px/10px "Liberation Sans", sans-serif; }
.mark svg, .mark span { grid-area: 1 / 1; }
.mark svg { height: 17px; }
.mark span { text-align: left; }
.row .serif { font: bold 14px "Liberation Serif", serif; }
.row .italic { font-style: italic; }
.under { text-decoration: underline; }
.row .strike { font: 9px "Liberation Serif", serif; text-decoration: line-through; }
.row .script { font: bold 13px "DejaVu Sans", sans-serif; }
.script sup, .script sub { font-size: 6px; line-height: 8px; color: #2853a0; }
.script sup { align-self: flex-start; padding-top: 2px; }
.script sub { align-self: flex-end; padding-bottom: 2px; }
.row .styleprops { font: italic bold 15px "Liberation Serif", serif; color: #3a63ad; }
.styleprops b { color: #6a4c9c; text-decoration: underline; }
textarea { display: block; width: 100%; height: 158px; border: 0; resize: none; outline: 0; }
.status { display: flex; justify-content: space-between; align-items: center; height: 21px; padding-left: 2px; direction: ltr; border-top: 1px solid #ccc; background: #f0f0ee; }
.status svg { width: 12px; height: 12px; align-self: flex-end; }
.submit, .pick { border: 1px solid #adadad; background: #e1e1e1; }
.submit { width: 100px; height: 22px; margin-top: 38px; font-size: 13px; }
.download-bar { width: 100%; max-width: 500px; height: 31px; margin-top: 43px; border: 1px solid #7595c4; box-shadow: inset 0 -1px #e2efff, inset 0 -2px #7595c4; background: linear-gradient(#c3dcff, #93c3ff 45%, #64a5f6 50%, #a7dcff); font-size: 12px; }
.pick { width: 82px; height: 19px; margin-top: 38px; }
```
